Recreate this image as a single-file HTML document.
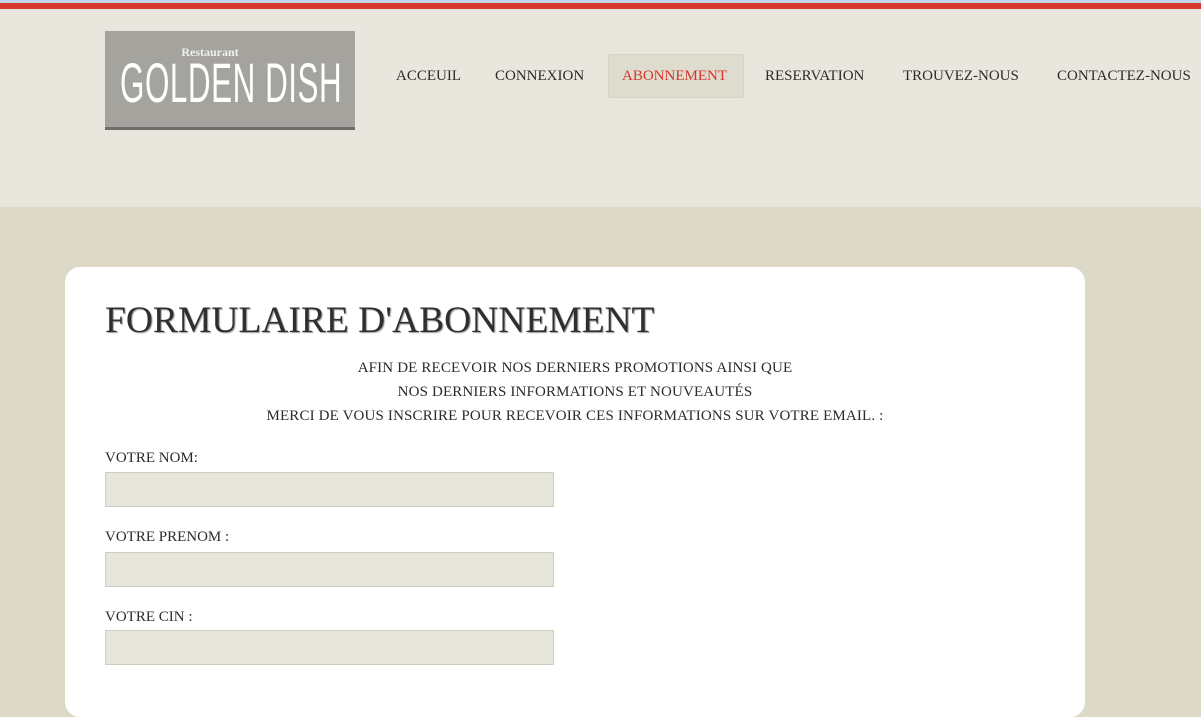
<!DOCTYPE html>
<html><head><meta charset="utf-8"><style>
*{margin:0;padding:0;box-sizing:border-box}
body{width:1201px;height:683px;overflow:hidden;background:#dcd9c9;font-family:"Liberation Serif",serif;color:#2b2b2b;position:relative}
.top{position:absolute;left:0;top:0;width:1201px;height:3px;background:#c4d3e6}
.red{position:absolute;left:0;top:3px;width:1201px;height:6px;background:#d73a2a}
.head{position:absolute;left:0;top:9px;width:1201px;height:198px;background:#e9e7dd}
.logo{position:absolute;left:105px;top:31px;width:250px;height:99px;background:#a4a39e;border-bottom:3px solid #6f6e6a;overflow:hidden}
.logo .r{position:absolute;left:0;width:100%;top:14px;text-align:center;color:#f1f0eb;font-weight:bold;font-size:12px;padding-right:40px}
.logo .g{position:absolute;left:15px;top:24px;white-space:nowrap;color:#fff;font-family:"Liberation Sans",sans-serif;font-size:56px;line-height:56px;letter-spacing:1px;transform:scaleX(.56);transform-origin:left}
.nav a{position:absolute;top:68px;font-size:15px;color:#2b2b2b;text-decoration:none;white-space:nowrap}
.act{position:absolute;left:608px;top:54px;width:136px;height:44px;background:#dedcce;border:1px solid #d3d1c2;border-radius:3px}
.card{position:absolute;left:65px;top:267px;width:1020px;height:450px;background:#fff;border-radius:15px}
h1{position:absolute;left:105px;top:299px;font-size:37.5px;font-weight:normal;color:#2f2f2f;text-shadow:1px 1px 1px #999;white-space:nowrap}
.intro{position:absolute;left:65px;width:1020px;top:356px;text-align:center;font-size:15px;letter-spacing:.15px;line-height:24px}
.lbl{position:absolute;left:105px;font-size:15px}
.in{position:absolute;left:105px;width:449px;height:35px;background:#e7e6dc;border:1px solid #cfcdbd}
</style></head><body>
<div class="top"></div><div class="red"></div><div class="head"></div>
<div class="logo"><div class="r">Restaurant</div><div class="g">GOLDEN DISH</div></div>
<div class="act"></div>
<div class="nav">
<a style="left:396px">ACCEUIL</a>
<a style="left:495px">CONNEXION</a>
<a style="left:622px;color:#d9352a">ABONNEMENT</a>
<a style="left:765px">RESERVATION</a>
<a style="left:903px">TROUVEZ-NOUS</a>
<a style="left:1057px">CONTACTEZ-NOUS</a>
</div>
<div class="card"></div>
<h1>FORMULAIRE D'ABONNEMENT</h1>
<div class="intro">AFIN DE RECEVOIR NOS DERNIERS PROMOTIONS AINSI QUE<br>NOS DERNIERS INFORMATIONS ET NOUVEAUTÉS<br>MERCI DE VOUS INSCRIRE POUR RECEVOIR CES INFORMATIONS SUR VOTRE EMAIL. :</div>
<div class="lbl" style="top:450px">VOTRE NOM:</div><div class="in" style="top:472px"></div>
<div class="lbl" style="top:529px">VOTRE PRENOM :</div><div class="in" style="top:552px"></div>
<div class="lbl" style="top:609px">VOTRE CIN :</div><div class="in" style="top:630px"></div>
</body></html>
